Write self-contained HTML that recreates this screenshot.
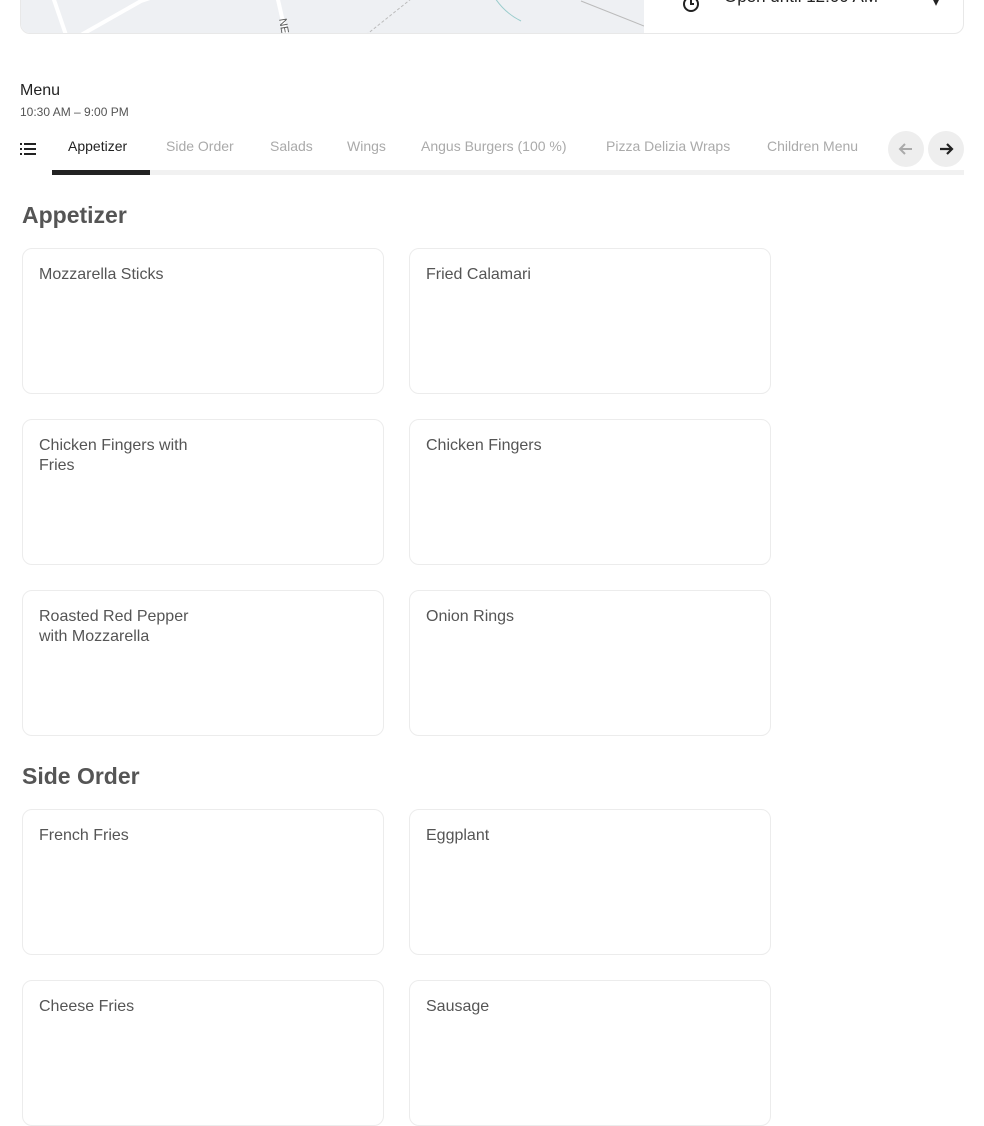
<!DOCTYPE html>
<html><head><meta charset="utf-8"><style>
*{box-sizing:border-box;margin:0;padding:0}
body{width:984px;height:1082px;overflow:hidden;background:#fff;font-family:"Liberation Sans",sans-serif;color:#545454;position:relative}
.top{position:absolute;left:20px;top:-10px;width:944px;height:44px;border:1px solid #e8e8e8;border-radius:0 0 10px 10px;overflow:hidden;background:#fff}
.map{position:absolute;left:0;top:0;width:623px;height:44px;background:#eef0f3}
.open{position:absolute;left:703px;top:-4px;font-size:17px;color:#222}
.h{position:absolute;left:20px;font-size:16px;color:#222}
.tabs{position:absolute;left:0;top:136px;font-size:14px;color:#aaa}
.tabs span{position:absolute;top:2px;white-space:nowrap}
.bar{position:absolute;left:52px;top:170px;width:912px;height:5px;background:#f1f1f1}
.bar i{position:absolute;left:0;top:0;width:98px;height:5px;background:#222}
.circ{position:absolute;top:131px;width:36px;height:36px;border-radius:50%;background:#eee}
.sec{position:absolute;left:22px;font-size:23px;font-weight:bold;color:#555}
.card{position:absolute;width:362px;height:146px;border:1px solid #ececec;border-radius:10px;padding:16px 16px;font-size:16px;color:#555;line-height:20px}
</style></head><body>
<div class="top"><div class="map">
<svg width="623" height="44" style="position:absolute;left:0;top:0"><g stroke="#fff" stroke-width="4" fill="none"><path d="M60 44 L120 10 L150 0"/><path d="M30 0 L45 44"/><path d="M255 0 L265 44"/></g><path d="M470 0 Q480 20 500 30" stroke="#9cc" fill="none"/><path d="M345 44 L400 0" stroke="#bbb" stroke-dasharray="3 2" fill="none"/><path d="M560 10 L623 35" stroke="#bbb" fill="none"/><text x="258" y="28" font-size="11" fill="#555" transform="rotate(80 258 28)">NE</text></svg>
</div>
<svg style="position:absolute;left:660px;top:3px" width="20" height="20"><circle cx="10" cy="10" r="7" stroke="#222" stroke-width="2" fill="none"/><path d="M10 6v4h3" stroke="#222" stroke-width="2" fill="none"/></svg>
<div class="open">Open until 12:00 AM</div>
<div style="position:absolute;left:912px;top:4px;font-size:12px;color:#222">▾</div>
</div>
<div class="h" style="top:82px">Menu</div>
<div class="h" style="top:105px;font-size:12px;color:#555">10:30 AM – 9:00 PM</div>
<svg style="position:absolute;left:20px;top:142px" width="16" height="14"><g fill="#222"><rect x="0" y="1" width="2" height="2"/><rect x="4" y="1" width="12" height="2"/><rect x="0" y="6" width="2" height="2"/><rect x="4" y="6" width="12" height="2"/><rect x="0" y="11" width="2" height="2"/><rect x="4" y="11" width="12" height="2"/></g></svg>
<div class="tabs">
<span style="left:68px;color:#222">Appetizer</span><span style="left:166px">Side Order</span><span style="left:270px">Salads</span><span style="left:347px">Wings</span><span style="left:421px">Angus Burgers (100 %)</span><span style="left:606px">Pizza Delizia Wraps</span><span style="left:767px">Children Menu</span>
</div>
<div class="circ" style="left:888px"><svg width="36" height="36"><path d="M24 18H12M17 13l-5 5 5 5" stroke="#aaa" stroke-width="2" fill="none"/></svg></div>
<div class="circ" style="left:928px"><svg width="36" height="36"><path d="M12 18h12M19 13l5 5-5 5" stroke="#222" stroke-width="2.2" fill="none"/></svg></div>
<div class="bar"><i></i></div>
<div class="sec" style="top:202px">Appetizer</div>
<div class="card" style="left:22px;top:248px">Mozzarella Sticks</div>
<div class="card" style="left:409px;top:248px">Fried Calamari</div>
<div class="card" style="left:22px;top:419px">Chicken Fingers with<br>Fries</div>
<div class="card" style="left:409px;top:419px">Chicken Fingers</div>
<div class="card" style="left:22px;top:590px">Roasted Red Pepper<br>with Mozzarella</div>
<div class="card" style="left:409px;top:590px">Onion Rings</div>
<div class="sec" style="top:763px">Side Order</div>
<div class="card" style="left:22px;top:809px">French Fries</div>
<div class="card" style="left:409px;top:809px">Eggplant</div>
<div class="card" style="left:22px;top:980px">Cheese Fries</div>
<div class="card" style="left:409px;top:980px">Sausage</div>
</body></html>
